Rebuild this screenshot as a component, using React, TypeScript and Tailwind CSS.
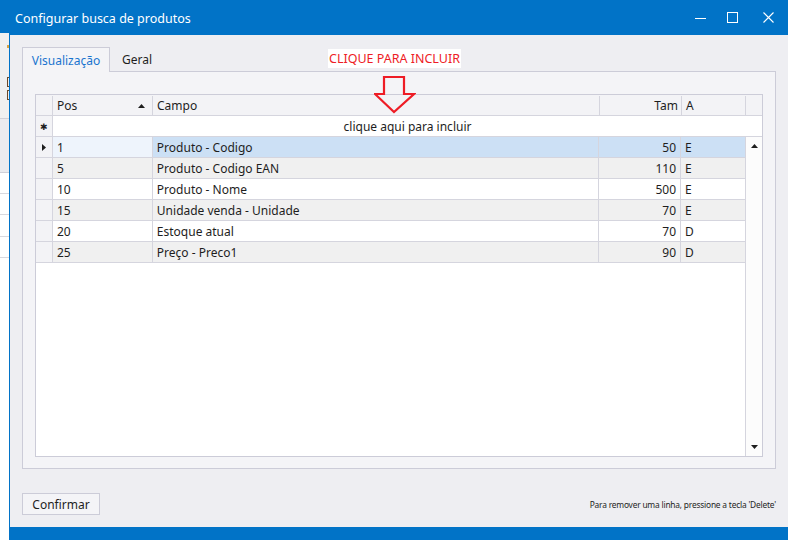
import React from "react";

const rows = [
  { pos: "1", campo: "Produto - Codigo", tam: "50", a: "E" },
  { pos: "5", campo: "Produto - Codigo EAN", tam: "110", a: "E" },
  { pos: "10", campo: "Produto - Nome", tam: "500", a: "E" },
  { pos: "15", campo: "Unidade venda - Unidade", tam: "70", a: "E" },
  { pos: "20", campo: "Estoque atual", tam: "70", a: "D" },
  { pos: "25", campo: "Preço - Preco1", tam: "90", a: "D" },
];

export default function App() {
  return (
    <div className="flex h-[540px] w-[788px] overflow-hidden font-['Noto_Sans',sans-serif] text-[12px] text-[#1e1e1e]">
      {/* parent window peeking out on the left */}
      <div className="flex w-[9px] shrink-0 flex-col bg-[#f0f0f0]">
        <div className="h-[33px] bg-[#0173c7]" />
        <div className="ml-[7px] mt-[12px] h-[3px] w-[2px] bg-[#d9a441]" />
        <div className="ml-[7px] mt-[29px] h-[10px] w-[2px] border-y border-l border-[#6b4a2a]" />
        <div className="ml-[7px] mt-[3px] h-[10px] w-[2px] border-y border-l border-[#6b4a2a]" />
        <div className="mt-[18px] h-[55px] border-y border-[#d0d0d8] bg-[#ebebef]" />
        <div className="h-[21px] border-b border-[#d8d8de] bg-white" />
        <div className="h-[21px] border-b border-[#d8d8de] bg-white" />
        <div className="h-[22px] border-b border-[#d8d8de] bg-white" />
        <div className="h-[21px] border-b border-[#d8d8de] bg-white" />
        <div className="flex-1 bg-white" />
      </div>

      {/* dialog */}
      <div className="relative flex flex-1 flex-col border-l border-[#0173c7]">
        <div className="flex h-[35px] shrink-0 items-center bg-[#0173c7] pl-[5px] text-white">
          <span className="pt-[3px] text-[12.5px]">Configurar busca de produtos</span>
          <div className="ml-auto flex h-full items-center">
            <div className="flex w-[32px] justify-center">
              <svg width="11" height="11" viewBox="0 0 11 11">
                <path d="M0 6.5h11" stroke="white" strokeWidth="1" />
              </svg>
            </div>
            <div className="flex w-[32px] justify-center">
              <svg width="11" height="11" viewBox="0 0 11 11">
                <rect x="0.5" y="0.5" width="10" height="10" fill="none" stroke="white" strokeWidth="1" />
              </svg>
            </div>
            <div className="flex w-[40px] justify-center">
              <svg width="11" height="11" viewBox="0 0 11 11">
                <path d="M0.5 0.5l10 10M10.5 0.5l-10 10" stroke="white" strokeWidth="1.1" />
              </svg>
            </div>
          </div>
        </div>

        <div className="flex flex-1 flex-col bg-[#eeeef2] pl-[12px] pr-[12px] pt-[12px]">
          {/* tabs */}
          <div className="flex h-[24px] items-end">
            <div className="relative z-10 -mb-px flex h-[25px] w-[88px] items-center justify-center border border-b-0 border-[#ccccd8] bg-[#f4f4f7] pt-[2px] text-[#1a75cf]">
              Visualização
            </div>
            <div className="flex h-[24px] items-center pl-[12px] pt-[2px] text-[#1e1e1e]">
              Geral
            </div>
          </div>

          {/* tab panel */}
          <div className="h-[398px] border border-[#ccccd8] bg-[#f4f4f7] pl-[12px] pr-[11px] pt-[22px]">
            <Grid />
          </div>

          {/* footer */}
          <div className="mt-[24px] flex items-center">
            <button className="h-[22px] w-[78px] border border-[#ccccd8] bg-[#f4f4f7] pt-[2px] text-[12px] text-[#1e1e1e]">
              Confirmar
            </button>
            <span className="ml-auto pt-[3px] text-[8.4px] tracking-[-0.2px] text-[#1e1e1e]">
              Para remover uma linha, pressione a tecla 'Delete'
            </span>
          </div>
        </div>

        <div className="h-[13px] shrink-0 bg-[#0173c7]" />

        {/* annotation */}
        <div className="absolute left-[318px] top-[49px] bg-white px-[1px] pt-[1px] text-[12.5px] leading-[18px] text-[#ee1c25]">
          CLIQUE PARA INCLUIR
        </div>
        <svg
          className="absolute left-[364px] top-[76px]"
          width="42"
          height="38"
          viewBox="0 0 42 38"
        >
          <path
            d="M10 1h20v17h10L20 36 1 18h9z"
            fill="none"
            stroke="#ee1c25"
            strokeWidth="2.2"
            strokeLinejoin="miter"
          />
        </svg>
      </div>
    </div>
  );
}

function Grid() {
  return (
    <div className="flex h-[363px] w-[728px] flex-col border border-[#ccccd8] bg-white">
      {/* header */}
      <div className="flex h-[21px] shrink-0 border-b border-[#d5d5de] bg-[#f3f3f6] pt-[1px]">
        <div className="w-[17px] border-r border-[#d5d5de]" />
        <div className="flex w-[100px] items-center border-r border-[#d5d5de] pl-[4px]">
          Pos
          <svg className="ml-auto mr-[7px]" width="7" height="4" viewBox="0 0 7 4">
            <path d="M3.5 0L7 4H0z" fill="#1e1e1e" />
          </svg>
        </div>
        <div className="flex w-[447px] items-center border-r border-[#d5d5de] pl-[4px]">Campo</div>
        <div className="flex w-[82px] items-center justify-end border-r border-[#d5d5de] pr-[3px]">Tam</div>
        <div className="flex w-[64px] items-center border-r border-[#d5d5de] pl-[4px]">A</div>
        <div className="flex-1" />
      </div>

      {/* new row */}
      <div className="flex h-[21px] shrink-0 border-b border-[#d5d5de]">
        <div className="flex w-[17px] items-center justify-center border-r border-[#d5d5de] bg-[#f3f3f6] text-[9px] leading-none">
          ✱
        </div>
        <div className="flex flex-1 items-center justify-center pt-[1px]">clique aqui para incluir</div>
      </div>

      <div className="flex flex-1">
        <div className="flex w-[709px] flex-col">
          {rows.map((r, i) => {
            const sel = i === 0;
            const bg = sel ? "bg-[#cce0f5]" : i % 2 === 1 ? "bg-[#f0f0f0]" : "bg-white";
            return (
              <div key={r.pos} className={`flex h-[21px] border-b border-[#d5d5de] ${bg}`}>
                <div className="flex w-[17px] items-center justify-center border-r border-[#d5d5de] bg-[#f3f3f6]">
                  {sel && (
                    <svg width="4" height="7" viewBox="0 0 4 7">
                      <path d="M0 0l4 3.5L0 7z" fill="#1e1e1e" />
                    </svg>
                  )}
                </div>
                <div
                  className={`flex w-[100px] items-center border-r border-[#d5d5de] pl-[4px] pt-[2px] ${
                    sel ? "bg-[#eef4fc]" : ""
                  }`}
                >
                  {r.pos}
                </div>
                <div className="flex w-[447px] items-center border-r border-[#d5d5de] pl-[4px] pt-[2px]">{r.campo}</div>
                <div className="flex w-[82px] items-center justify-end border-r border-[#d5d5de] pr-[4px] pt-[2px]">{r.tam}</div>
                <div className="flex w-[64px] items-center pl-[4px] pt-[2px]">{r.a}</div>
              </div>
            );
          })}
        </div>
        {/* vertical scrollbar */}
        <div className="flex flex-1 flex-col items-center justify-between border-l border-[#d5d5de] bg-[#fcfcfc] py-[7px]">
          <svg width="7" height="4" viewBox="0 0 7 4">
            <path d="M3.5 0L7 4H0z" fill="#1e1e1e" />
          </svg>
          <svg width="7" height="4" viewBox="0 0 7 4">
            <path d="M0 0h7L3.5 4z" fill="#1e1e1e" />
          </svg>
        </div>
      </div>
    </div>
  );
}
